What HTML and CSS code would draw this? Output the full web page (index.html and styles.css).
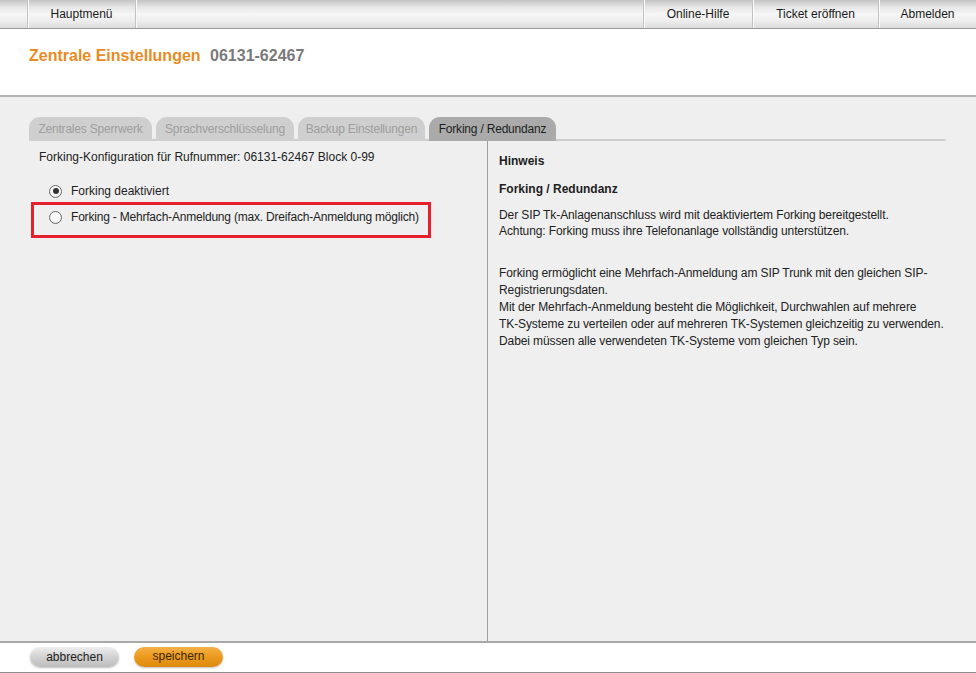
FILE: index.html
```html
<!DOCTYPE html>
<html lang="de">
<head>
<meta charset="utf-8">
<title>Zentrale Einstellungen</title>
<link rel="stylesheet" href="styles.css">
</head>
<body>
<div class="page">
  <nav class="topbar">
    <div class="nav-cell nav-cell--spacer"></div>
    <a class="nav-cell nav-cell--main">Hauptmenü</a>
    <div class="nav-fill"></div>
    <a class="nav-cell nav-cell--help">Online-Hilfe</a>
    <a class="nav-cell nav-cell--ticket">Ticket eröffnen</a>
    <a class="nav-cell nav-cell--logout">Abmelden</a>
  </nav>

  <header class="header">
    <h1 class="title">Zentrale Einstellungen <span class="title-number">06131-62467</span></h1>
  </header>

  <main class="main">
    <div class="tabs">
      <span class="tab tab--w1">Zentrales Sperrwerk</span>
      <span class="tab tab--w2">Sprachverschlüsselung</span>
      <span class="tab tab--w3">Backup Einstellungen</span>
      <span class="tab tab--w3 tab--active">Forking / Redundanz</span>
    </div>
    <div class="content">
      <section class="panel-left">
        <p class="config-line">Forking-Konfiguration für Rufnummer: 06131-62467 Block 0-99</p>
        <div class="options">
          <label class="option">
            <span class="radio radio--checked"></span>
            <span>Forking deaktiviert</span>
          </label>
          <label class="option option--highlight">
            <span class="radio"></span>
            <span>Forking - Mehrfach-Anmeldung (max. Dreifach-Anmeldung möglich)</span>
          </label>
        </div>
      </section>
      <aside class="panel-right">
        <h2 class="hint-title">Hinweis</h2>
        <h3 class="hint-sub">Forking / Redundanz</h3>
        <p class="hint-text">Der SIP Tk-Anlagenanschluss wird mit deaktiviertem Forking bereitgestellt.<br>Achtung: Forking muss ihre Telefonanlage vollständig unterstützen.</p>
        <p class="hint-text hint-text--second">Forking ermöglicht eine Mehrfach-Anmeldung am SIP Trunk mit den gleichen SIP-Registrierungsdaten.<br>Mit der Mehrfach-Anmeldung besteht die Möglichkeit, Durchwahlen auf mehrere <span class="nobr">TK-Systeme</span> zu verteilen oder auf mehreren <span class="nobr">TK-Systemen</span> gleichzeitig zu verwenden.<br>Dabei müssen alle verwendeten <span class="nobr">TK-Systeme</span> vom gleichen Typ sein.</p>
      </aside>
    </div>
  </main>

  <footer class="footer">
    <button class="btn btn--grey">abbrechen</button>
    <button class="btn btn--orange">speichern</button>
  </footer>
</div>
</body>
</html>
```

FILE: styles.css
```css
* { box-sizing: border-box; }

html, body {
  margin: 0;
  padding: 0;
  height: 100%;
}

body {
  font-family: "Liberation Sans", Arial, sans-serif;
  font-size: 12px;
  color: #222;
  background: #fff;
}

.page {
  display: flex;
  flex-direction: column;
  height: 673px;
}

/* top navigation */
.topbar {
  display: flex;
  height: 29px;
  border-bottom: 1px solid #9c9c9c;
  background: linear-gradient(#c4c4c4 0%, #e6e6e6 25%, #f6f6f6 50%, #ededed 75%, #dcdcdc 100%);
}

.nav-cell {
  display: flex;
  align-items: center;
  justify-content: center;
  color: #1a1a1a;
  font-size: 12px;
  padding-bottom: 1px;
}

.nav-cell--spacer {
  width: 28px;
  border-right: 1px solid #c2c2c2;
  box-shadow: 1px 0 0 #fafafa;
}

.nav-cell--main {
  width: 108px;
  border-right: 1px solid #c2c2c2;
  box-shadow: 1px 0 0 #fafafa;
}

.nav-fill { flex: 1; }

.nav-cell--help,
.nav-cell--ticket,
.nav-cell--logout {
  border-left: 1px solid #c2c2c2;
  box-shadow: inset 1px 0 0 #fafafa;
}

.nav-cell--help { width: 109px; }
.nav-cell--ticket { width: 126px; }
.nav-cell--logout { width: 98px; }

/* header */
.header {
  height: 68px;
  border-bottom: 2px solid #b4b4b4;
  padding: 17px 0 0 29px;
}

.title {
  margin: 0;
  font-size: 16px;
  line-height: 20px;
  font-weight: bold;
  color: #ea8b1f;
}

.title-number {
  color: #7a7a7a;
  margin-left: 5px;
}

/* main area */
.main {
  flex: 1;
  display: flex;
  flex-direction: column;
  background: #efefef;
  border-bottom: 2px solid #a8a8a8;
  padding-top: 20px;
}

.tabs {
  display: flex;
  gap: 4px;
  margin-left: 29px;
  width: 917px;
  border-bottom: 2px solid #cdcdcd;
  border-radius: 0 0 2px 0;
}

.tab {
  height: 24px;
  margin-bottom: -2px;
  border-radius: 11px 11px 0 0;
  background: #cfcfcf;
  color: #9e9e9e;
  display: flex;
  align-items: center;
  justify-content: center;
  font-size: 12px;
  letter-spacing: -0.2px;
  white-space: nowrap;
}

.tab--w1 { width: 123px; }
.tab--w2 { width: 138px; }
.tab--w3 { width: 127px; }

.tab--active {
  background: #aaaaaa;
  color: #1e1e1e;
}

.content {
  flex: 1;
  display: flex;
}

.panel-left {
  width: 459px;
  margin-left: 29px;
  border-right: 1px solid #9e9e9e;
  padding: 8px 0 0 10px;
}

.config-line {
  margin: 0;
  line-height: 16px;
}

.options {
  margin: 16px 0 0 -8px;
  width: 400px;
}

.option {
  display: flex;
  align-items: center;
  gap: 9px;
  height: 20px;
  padding-left: 18px;
  margin-bottom: 1px;
  white-space: nowrap;
}

.option--highlight {
  height: 36px;
  border: 3px solid #e3202b;
  padding: 0 0 6px 15px;
  letter-spacing: -0.2px;
}

.radio {
  width: 13px;
  height: 13px;
  border-radius: 50%;
  border: 1px solid #6b6b6b;
  background: radial-gradient(circle at 50% 40%, #ffffff 0%, #f4f4f4 60%, #dcdcdc 100%);
  position: relative;
  flex: none;
}

.radio--checked::after {
  content: "";
  position: absolute;
  left: 2.5px;
  top: 2.5px;
  width: 6px;
  height: 6px;
  border-radius: 50%;
  background: #333;
}

.panel-right {
  flex: 1;
  padding: 12px 16px 0 11px;
}

.hint-title,
.hint-sub {
  margin: 0;
  font-size: 12px;
  line-height: 16px;
  font-weight: bold;
  color: #1e1e1e;
}

.hint-sub { margin-top: 12px; }

.hint-text {
  margin: 10px 0 0;
  line-height: 16px;
  color: #222;
  letter-spacing: -0.1px;
}

.hint-text--second {
  margin-top: 26px;
  line-height: 17px;
}

.nobr { white-space: nowrap; }

/* footer */
.footer {
  height: 30px;
  border-bottom: 1px solid #8e8e8e;
  display: flex;
  align-items: flex-start;
  gap: 15px;
  padding: 4px 0 0 30px;
  background: #fff;
}

.btn {
  width: 89px;
  height: 20px;
  border: none;
  border-radius: 10px;
  font-family: "Liberation Sans", Arial, sans-serif;
  font-size: 12px;
  padding: 0 0 1px;
  cursor: pointer;
  box-shadow: 0 1px 2px rgba(0, 0, 0, 0.25);
}

.btn--grey {
  background: linear-gradient(#eeeeee, #d2d2d2 50%, #bdbdbd);
  color: #222;
}

.btn--orange {
  background: linear-gradient(#f5b048, #ec9a1c 50%, #dd8a10);
  color: #3b2700;
  padding-bottom: 3px;
}
```
